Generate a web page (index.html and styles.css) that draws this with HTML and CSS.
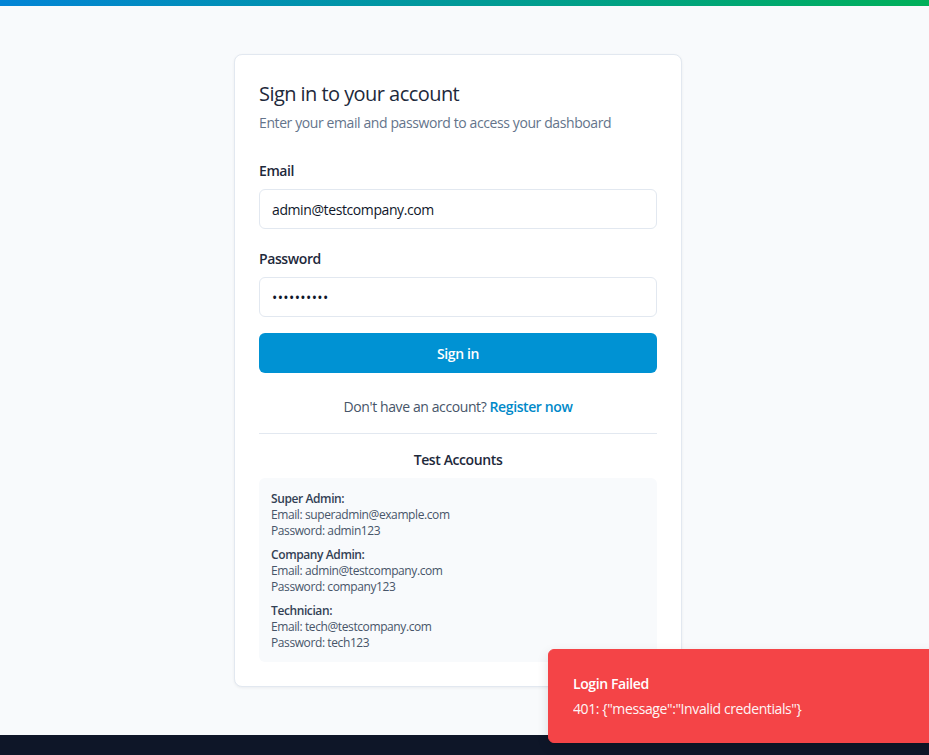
FILE: index.html
```html
<!DOCTYPE html>
<html lang="en">
<head>
<meta charset="utf-8">
<title>Sign in</title>
<link rel="stylesheet" href="styles.css">
</head>
<body>
<div class="topbar"></div>
<main class="main">
  <section class="card">
    <h1 class="title">Sign in to your account</h1>
    <p class="subtitle">Enter your email and password to access your dashboard</p>
    <form class="form">
      <div class="field">
        <label class="label">Email</label>
        <div class="input">admin@testcompany.com</div>
      </div>
      <div class="field">
        <label class="label">Password</label>
        <div class="input pw">••••••••••</div>
      </div>
      <div class="button">Sign in</div>
    </form>
    <p class="register">Don't have an account? <a class="link">Register now</a></p>
    <div class="divider"></div>
    <h2 class="test-title">Test Accounts</h2>
    <div class="accounts">
      <div class="acct">
        <div class="role">Super Admin:</div>
        <div>Email: superadmin@example.com</div>
        <div>Password: admin123</div>
      </div>
      <div class="acct">
        <div class="role">Company Admin:</div>
        <div>Email: admin@testcompany.com</div>
        <div>Password: company123</div>
      </div>
      <div class="acct">
        <div class="role">Technician:</div>
        <div>Email: tech@testcompany.com</div>
        <div>Password: tech123</div>
      </div>
    </div>
  </section>
</main>
<footer class="footer"></footer>
<div class="toast">
  <div class="toast-title">Login Failed</div>
  <div class="toast-desc">401: {"message":"Invalid credentials"}</div>
</div>
</body>
</html>
```
FILE: styles.css
```css
* { box-sizing: border-box; }
html, body { margin: 0; padding: 0; }
body {
  background: #f8fafc;
  font-family: "Open Sans", "Noto Sans", sans-serif;
  letter-spacing: -0.4px;
  color: #1e293b;
  height: 755px;
  overflow: hidden;
  position: relative;
}
.topbar {
  height: 6px;
  background: linear-gradient(90deg, #0284d6, #00b05a);
}
.main {
  height: 729px;
  display: flex;
  justify-content: center;
  align-items: flex-start;
  padding: 48px 13px 0 0;
}
.card {
  width: 448px;
  background: #fff;
  border: 1px solid #e2e8f0;
  border-radius: 8px;
  box-shadow: 0 1px 3px rgba(15, 23, 42, 0.06);
  padding: 24px;
}
.title {
  margin: 0;
  font-size: 20px;
  line-height: 30px;
  font-weight: 500;
  letter-spacing: -0.55px;
  color: #1e293b;
}
.subtitle {
  margin: 4px 0 0;
  font-size: 14px;
  line-height: 20px;
  color: #64748b;
}
.form {
  margin-top: 28px;
  display: flex;
  flex-direction: column;
  gap: 16px;
}
.field { display: flex; flex-direction: column; gap: 8px; }
.field + .field { margin-top: 4px; }
.label {
  font-size: 14px;
  line-height: 20px;
  font-weight: 600;
  color: #1e293b;
}
.input {
  height: 40px;
  border: 1px solid #e2e8f0;
  border-radius: 6px;
  background: #fff;
  padding: 0 12px;
  display: flex;
  align-items: center;
  font-size: 14px;
  color: #0f172a;
}
.pw { letter-spacing: 0.4px; font-size: 14px; }
.button {
  height: 40px;
  border-radius: 6px;
  background: #0092d3;
  color: #fff;
  font-size: 14px;
  font-weight: 600;
  display: flex;
  align-items: center;
  justify-content: center;
}
.register {
  margin: 24px 0 0;
  text-align: center;
  font-size: 14px;
  line-height: 20px;
  color: #475569;
}
.link { color: #0089c9; font-weight: 600; }
.divider {
  height: 1px;
  background: #e2e8f0;
  margin-top: 16px;
}
.test-title {
  margin: 16px 0 0;
  text-align: center;
  font-size: 14px;
  line-height: 20px;
  font-weight: 600;
  color: #1e293b;
}
.accounts {
  margin-top: 8px;
  background: #f8fafc;
  border-radius: 6px;
  padding: 13px 12px 11px;
  font-size: 12px;
  line-height: 16px;
  color: #475569;
  display: flex;
  flex-direction: column;
  gap: 8px;
}
.role { font-weight: 600; color: #334155; }
.footer {
  height: 20px;
  background: #0e1628;
}
.toast {
  position: absolute;
  left: 548px;
  top: 649px;
  width: 420px;
  height: 94px;
  background: #f44447;
  border: 1px solid #f44447;
  border-radius: 6px;
  padding: 24px 24px 0;
  color: #fff;
  font-size: 14px;
  line-height: 20px;
  box-shadow: 0 4px 12px rgba(0,0,0,0.12);
}
.toast-title { font-weight: 600; }
.toast-desc { margin-top: 5px; opacity: 0.95; }
```
